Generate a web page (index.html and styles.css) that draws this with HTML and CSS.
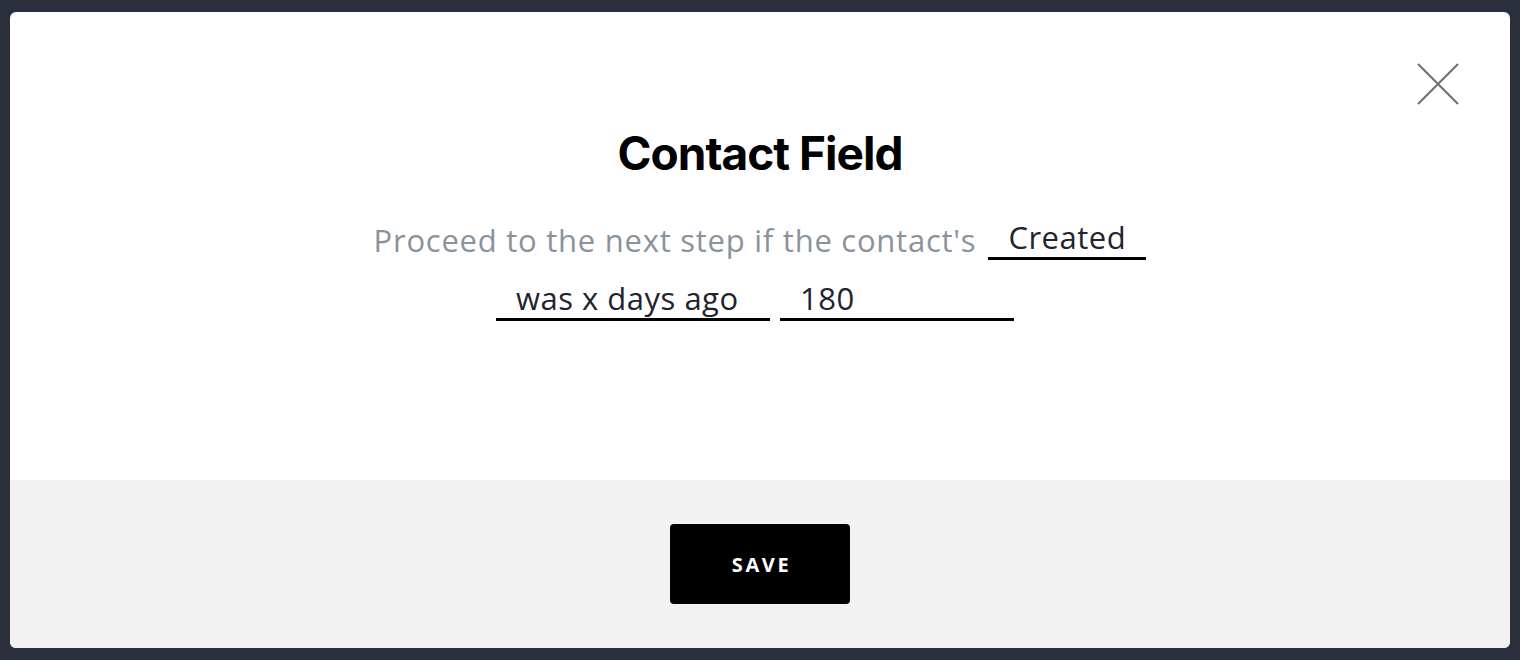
FILE: index.html
```html
<!DOCTYPE html>
<html lang="en">
<head>
<meta charset="utf-8">
<title>Contact Field</title>
<link rel="stylesheet" href="styles.css">
</head>
<body>
<div class="modal">
  <div class="modal-body">
    <button class="close" aria-label="Close">
      <svg width="42" height="42" viewBox="0 0 42 42"><path d="M1 1 L41 41 M41 1 L1 41" stroke="#6e6e6e" stroke-width="2" fill="none"/></svg>
    </button>
    <h1 class="title">Contact Field</h1>
    <div class="sentence">
      <div class="line line-1">
        <span class="lead">Proceed to the next step if the contact's</span>
        <span class="field field-created">Created</span>
      </div>
      <div class="line line-2">
        <span class="field field-op">was x days ago</span>
        <span class="field field-num">180</span>
      </div>
    </div>
  </div>
  <div class="modal-footer">
    <button class="save">SAVE</button>
  </div>
</div>
</body>
</html>
```
FILE: styles.css
```css
html, body {
  margin: 0;
  padding: 0;
  background: #2a2f3b;
  width: 1520px;
  height: 660px;
  overflow: hidden;
}
body {
  padding: 12px 10px;
  box-sizing: border-box;
}
.modal {
  width: 1500px;
  height: 636px;
  background: #ffffff;
  border-radius: 6px;
  overflow: hidden;
  display: flex;
  flex-direction: column;
}
.modal-body {
  position: relative;
  height: 468px;
  display: flex;
  flex-direction: column;
  align-items: center;
}
.close {
  position: absolute;
  top: 51px;
  right: 51px;
  width: 42px;
  height: 42px;
  padding: 0;
  border: 0;
  background: none;
}
.close svg { display: block; }
.title {
  margin: 114px 0 0;
  font-family: "Inter", "Liberation Sans", sans-serif;
  font-weight: 700;
  font-size: 46px;
  letter-spacing: -1px;
  line-height: 54px;
  color: #000;
}
.sentence {
  margin-top: 40px;
  display: flex;
  flex-direction: column;
  align-items: center;
  font-family: "Open Sans", "Liberation Sans", sans-serif;
  font-size: 31px;
  line-height: 40px;
}
.line {
  display: flex;
  align-items: flex-end;
  height: 61px;
}
.line-1 { height: 40px; gap: 12px; }
.line-2 { gap: 10px; padding-right: 10px; }
.lead {
  color: #8a939c;
  letter-spacing: 0.75px;
}
.field {
  display: inline-block;
  box-sizing: border-box;
  padding-left: 20px;
  color: #1f2430;
  border-bottom: 3px solid #000;
  line-height: 40px;
  letter-spacing: 0.5px;
}
.field-created { width: 158px; }
.field-op { width: 274px; }
.field-num { width: 234px; }
.modal-footer {
  flex: 1;
  background: #f2f2f2;
  display: flex;
  justify-content: center;
  padding-top: 44px;
  box-sizing: border-box;
}
.save {
  width: 180px;
  height: 80px;
  background: #000;
  color: #fff;
  border: 0;
  border-radius: 4px;
  font-family: "Open Sans", "Liberation Sans", sans-serif;
  font-weight: 700;
  font-size: 20px;
  letter-spacing: 2.6px;
  padding: 0 0 0 3px;
}
```
